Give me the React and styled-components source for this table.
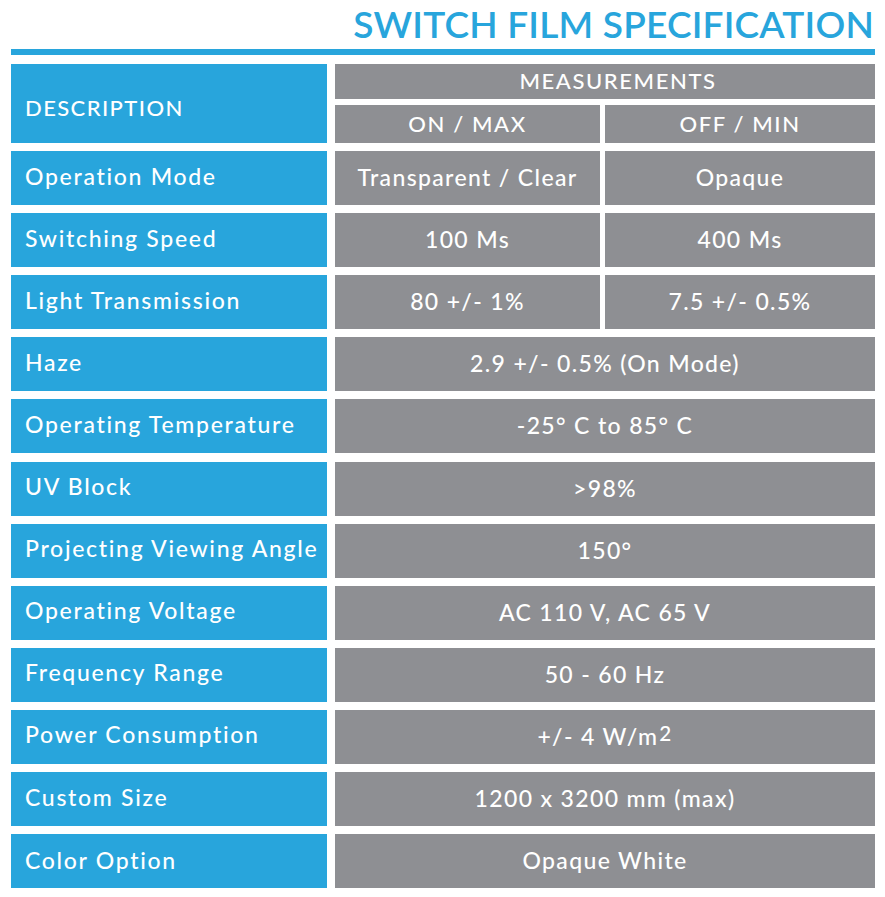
import React from "react";
import styled, { createGlobalStyle } from "styled-components";

const Global = createGlobalStyle`
  html, body { margin: 0; padding: 0; background: #ffffff; }
  body { font-family: "Lato", "Open Sans", sans-serif; }
`;

const BLUE = "#28a5dc";
const GRAY = "#8e8f93";

const Page = styled.div`
  width: 885px;
  height: 897px;
  box-sizing: border-box;
  padding: 0 10px 0 11px;
  display: flex;
  flex-direction: column;
`;

const Title = styled.h1`
  margin: 0;
  padding: 4px 1px 0 0;
  text-align: right;
  color: ${BLUE};
  font-family: "Lato", sans-serif;
  font-weight: 600;
  font-size: 37px;
  line-height: 40px;
  letter-spacing: 0.2px;
`;

const Rule = styled.div`
  height: 6px;
  background: ${BLUE};
  margin-top: 5px;
`;

const Table = styled.div`
  margin-top: 9px;
  display: flex;
  flex-direction: column;
  gap: 8.1px;
`;

const Row = styled.div`
  display: grid;
  grid-template-columns: 316px 540px;
  column-gap: 8px;
  height: ${(p) => p.$h || 54}px;
`;

const Label = styled.div`
  background: ${BLUE};
  color: #fff;
  display: flex;
  align-items: center;
  padding: 0 0 ${(p) => p.$lift || 5}px 14px;
  box-sizing: border-box;
  font-size: 23px;
  font-weight: 500;
  letter-spacing: 1.7px;
  white-space: nowrap;
`;

const HeadLabel = styled(Label)`
  padding: 7px 0 0 14px;
  font-size: 22px;
  letter-spacing: 1.4px;
`;

const Values = styled.div`
  display: grid;
  grid-template-columns: ${(p) => (p.$split ? "265px 270px" : "1fr")};
  column-gap: 5px;
`;

const Value = styled.div`
  background: ${GRAY};
  color: #fff;
  display: flex;
  align-items: center;
  justify-content: center;
  font-size: 23px;
  font-weight: 500;
  letter-spacing: 1.35px;
  white-space: nowrap;
  padding-bottom: 2px;
  box-sizing: border-box;
`;

const HeadStack = styled.div`
  display: grid;
  grid-template-rows: 35px 38px;
  row-gap: 6px;
`;

const HeadValue = styled(Value)`
  font-size: 22px;
  letter-spacing: 1.6px;
  padding-left: ${(p) => p.$shift || 0}px;
`;

const Sup = styled.sup`
  font-size: 0.9em;
  line-height: 0;
  position: relative;
  top: -0.12em;
  margin-left: 1px;
`;

const rows = [
  { label: "Operation Mode", values: ["Transparent / Clear", "Opaque"] },
  { label: "Switching Speed", values: ["100 Ms", "400 Ms"] },
  { label: "Light Transmission", values: ["80 +/- 1%", "7.5 +/- 0.5%"] },
  { label: "Haze", values: ["2.9 +/- 0.5% (On Mode)"] },
  { label: "Operating Temperature", values: ["-25° C to 85° C"] },
  { label: "UV Block", values: [">98%"] },
  { label: "Projecting Viewing Angle", values: ["150°"] },
  { label: "Operating Voltage", values: ["AC 110 V, AC 65 V"] },
  { label: "Frequency Range", values: ["50 - 60 Hz"] },
  {
    label: "Power Consumption",
    values: [
      <>
        +/- 4 W/m<Sup>2</Sup>
      </>,
    ],
  },
  { label: "Custom Size", values: ["1200 x 3200 mm (max)"] },
  { label: "Color Option", values: ["Opaque White"], lift: 2 },
];

export default function App() {
  return (
    <>
      <Global />
      <Page>
        <Title>SWITCH FILM SPECIFICATION</Title>
        <Rule />
        <Table>
          <Row $h={79}>
            <HeadLabel>DESCRIPTION</HeadLabel>
            <HeadStack>
              <HeadValue $shift={26}>MEASUREMENTS</HeadValue>
              <Values $split>
                <HeadValue>ON / MAX</HeadValue>
                <HeadValue>OFF / MIN</HeadValue>
              </Values>
            </HeadStack>
          </Row>
          {rows.map((r) => (
            <Row key={r.label}>
              <Label $lift={r.lift}>{r.label}</Label>
              <Values $split={r.values.length > 1}>
                {r.values.map((v, i) => (
                  <Value key={i}>{v}</Value>
                ))}
              </Values>
            </Row>
          ))}
        </Table>
      </Page>
    </>
  );
}
